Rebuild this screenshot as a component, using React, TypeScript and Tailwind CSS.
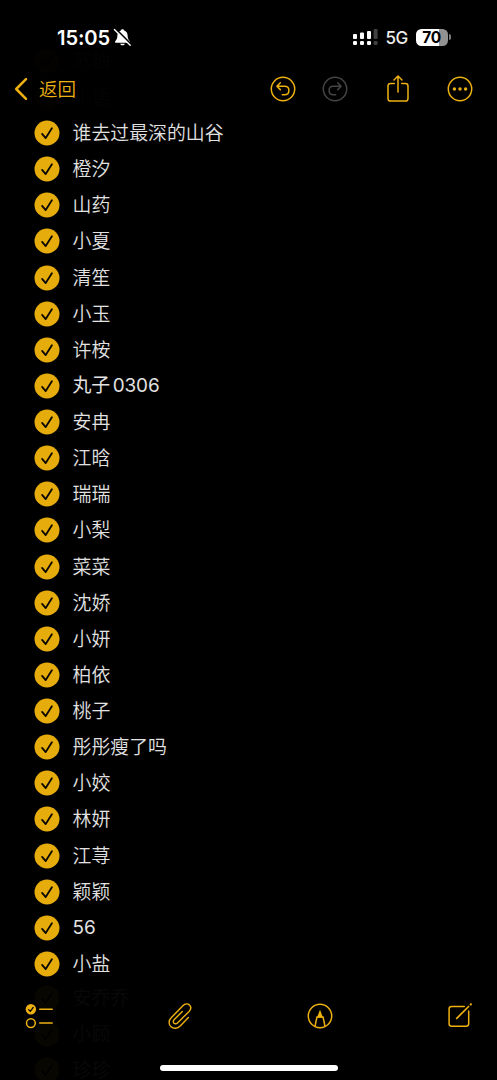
import type { ReactNode } from 'react';

const NAMES = [
  '谁去过最深的山谷', '橙汐', '山药', '小夏', '清笙', '小玉', '许桉', '丸子 0306',
  '安冉', '江晗', '瑞瑞', '小梨', '菜菜', '沈娇', '小妍', '柏依',
  '桃子', '彤彤瘦了吗', '小姣', '林妍', '江荨', '颖颖', '56', '小盐',
];
// rows scrolled under the translucent bars
const ABOVE = ['苏柚', '小语'];
const BELOW = ['安乔乔', '小顾', '珍珍'];

function CheckCircle() {
  return (
    <svg className="h-[26px] w-[26px] shrink-0" viewBox="0 0 26 26" fill="none">
      <circle cx="13" cy="13" r="12.5" fill="#e6ac0c" />
      <path d="M8.1 13.9l3.6 4.2 6.2-9.9" stroke="#0a0800" strokeWidth="1.8" strokeLinecap="round" strokeLinejoin="round" />
    </svg>
  );
}

function Row({ name }: { name: string }) {
  const latin = /\d/.test(name);
  return (
    <li className="flex h-[36.13px] items-center gap-[13px] pl-[33.5px]">
      <CheckCircle />
      <span className={`whitespace-pre text-[18.9px] leading-none text-[#e2e2e2] [word-spacing:-2.6px] ${latin ? 'pt-[2px] font-normal tracking-[-0.1px]' : 'pt-[3px] font-[350]'}`}>{name}</span>
    </li>
  );
}

function IconButton({ label, children }: { label: string; children: ReactNode }) {
  return <button aria-label={label} className="flex shrink-0 items-center justify-center">{children}</button>;
}

function StatusBar() {
  return (
    <div className="relative flex h-[66px] items-start justify-between pr-[46px] pl-[57px] pt-[26px]">
      <div className="flex h-[22px] items-center gap-[3px]">
        <span className="pt-[2px] text-[20.2px] font-semibold leading-none tracking-[-0.1px] text-white">15:05</span>
        <svg className="h-[19px] w-[19px]" viewBox="0 0 19 19" fill="none">
          <path d="M9.5 1.3c-.9 0-1.4.5-1.6 1.2-2.2.7-3.4 2.4-3.5 4.8-.1 3.6-.9 4.5-2.2 6-.5.6-.2 1.4.6 1.4h13.4c.8 0 1.1-.8.6-1.4-1.3-1.5-2.1-2.4-2.2-6-.1-2.4-1.3-4.1-3.5-4.8-.2-.7-.7-1.2-1.6-1.2z" fill="#fff" />
          <path d="M7.2 15.7h4.6c-.3 1-1.2 1.6-2.3 1.6s-2-.6-2.3-1.6z" fill="#fff" />
          <path d="M2.7.8l15.5 15.5" stroke="#000" strokeWidth="1.7" />
          <path d="M1.4 1.5l15.8 15.8" stroke="#fff" strokeWidth="1.4" strokeLinecap="round" />
        </svg>
      </div>
      <div className="flex h-[22px] items-center">
        <svg className="h-[18px] w-[26px]" viewBox="0 0 26 18">
          <g fill="#fff">
            <rect x="1" y="6" width="4" height="5" rx="1" />
            <rect x="8" y="4.5" width="4" height="6.5" rx="1" />
            <rect x="15" y="3" width="4" height="8" rx="1" />
            <rect x="1" y="13" width="4" height="4" rx="1.2" />
            <rect x="8" y="13" width="4" height="4" rx="1.2" />
            <rect x="15" y="13" width="4" height="4" rx="1.2" />
          </g>
          <g fill="#404040">
            <rect x="21.6" y="1" width="4" height="10" rx="1" />
            <rect x="21.6" y="13" width="4" height="4" rx="1.2" />
          </g>
        </svg>
        <span className="ml-[8px] w-[30.5px] pt-[2px] text-[17px] font-medium leading-none tracking-[-0.6px] text-[#eee]">5G</span>
        <div className="flex h-[17px] w-[32px] items-center justify-center rounded-[5.5px] bg-[linear-gradient(90deg,#fff_71%,#929292_71%)]">
          <span className="pr-[1px] pt-[1px] text-[15.5px] font-bold leading-none tracking-[-0.3px] text-black">70</span>
        </div>
        <span className="ml-[1px] h-[6px] w-[2px] rounded-r-full bg-[#808080]" />
      </div>
    </div>
  );
}

function NavBar() {
  return (
    <div className="relative flex h-[46px] items-center justify-between pr-[24px] pl-[14px] text-[#edb111]">
      <button className="flex items-center gap-[11px]">
        <svg className="h-[24px] w-[14px]" viewBox="0 0 14 24" fill="none" stroke="currentColor" strokeWidth="2.5" strokeLinecap="round" strokeLinejoin="round">
          <path d="M12 2.2L2.2 12 12 21.8" />
        </svg>
        <span className="text-[18.5px] font-[350] leading-none">返回</span>
      </button>
      <div className="flex items-center">
        <IconButton label="撤销">
          <svg className="h-[26px] w-[26px]" viewBox="0 0 26 26" fill="none" stroke="currentColor" strokeWidth="1.5" strokeLinecap="round" strokeLinejoin="round">
            <circle cx="13" cy="13" r="11.7" />
            <path d="M10.3 6.8L6.9 10.2l3.4 3.4M7.3 10.2h7.3c2.6 0 4.3 1.8 4.3 4.2s-1.7 4.3-4.3 4.3h-2.3" />
          </svg>
        </IconButton>
        <div className="ml-[26px] flex text-[#454545]">
          <IconButton label="重做">
            <svg className="h-[26px] w-[26px]" viewBox="0 0 26 26" fill="none" stroke="currentColor" strokeWidth="1.5" strokeLinecap="round" strokeLinejoin="round">
              <circle cx="13" cy="13" r="11.7" />
              <path d="M15.7 6.8l3.4 3.4-3.4 3.4M18.7 10.2h-7.3c-2.6 0-4.3 1.8-4.3 4.2s1.7 4.3 4.3 4.3h2.3" />
            </svg>
          </IconButton>
        </div>
        <div className="ml-[37.5px] mr-[.5px] flex">
          <IconButton label="共享">
            <svg className="h-[28px] w-[24px]" viewBox="0 0 24 28" fill="none" stroke="currentColor" strokeWidth="1.5" strokeLinecap="round" strokeLinejoin="round">
              <path d="M8.3 8.4H4.6C2.9 8.4 2 9.3 2 11v12.5c0 1.7.9 2.6 2.6 2.6h14.8c1.7 0 2.6-.9 2.6-2.6V11c0-1.7-.9-2.6-2.6-2.6h-3.7" />
              <path d="M12 17V1.2M8 5l4-4 4 4" />
            </svg>
          </IconButton>
        </div>
        <div className="ml-[37px] flex">
          <IconButton label="更多">
            <svg className="h-[26px] w-[26px]" viewBox="0 0 26 26" fill="none">
              <circle cx="13" cy="13" r="11.7" stroke="currentColor" strokeWidth="1.5" />
              <circle cx="7.4" cy="13" r="1.7" fill="currentColor" />
              <circle cx="13" cy="13" r="1.7" fill="currentColor" />
              <circle cx="18.6" cy="13" r="1.7" fill="currentColor" />
            </svg>
          </IconButton>
        </div>
      </div>
    </div>
  );
}

function Toolbar() {
  return (
    <div className="relative flex h-[68px] items-center justify-between pr-[24px] pl-[25px] text-[#edb111]">
      <IconButton label="核对清单">
        <svg className="h-[28px] w-[29px]" viewBox="0 0 29 28" fill="none" stroke="currentColor" strokeWidth="1.5" strokeLinecap="round" strokeLinejoin="round">
          <circle cx="5.9" cy="7.2" r="5.2" fill="currentColor" stroke="none" />
          <path d="M3.6 7.7l1.7 1.7 2.9-4.1" stroke="#000" strokeWidth="1.2" />
          <circle cx="5.9" cy="21.1" r="4.4" />
          <path d="M14.7 7.2h12.5M14.7 21.1h12.5" />
        </svg>
      </IconButton>
      <div className="-ml-[2px] mr-[2px] flex">
        <IconButton label="附件">
          <svg className="h-[28px] w-[26px]" viewBox="0 0 26 28" fill="none" stroke="currentColor" strokeWidth="1.4" strokeLinecap="round" strokeLinejoin="round">
            <path d="M22.4 15.6l-8.2 8.3c-2.7 2.8-6.6 3.2-9.2.9-2.6-2.4-2.5-6.3.2-9L17.1 3.5c1.9-1.9 4.7-2.1 6.4-.5 1.7 1.7 1.5 4.4-.4 6.4L11.5 20.9c-1.1 1.1-2.6 1.2-3.5.3-.9-1-.8-2.5.3-3.6l8-8.1" />
          </svg>
        </IconButton>
      </div>
      <IconButton label="标记">
        <svg className="h-[26px] w-[26px]" viewBox="0 0 26 26" fill="none" stroke="currentColor" strokeWidth="1.5" strokeLinejoin="round">
          <circle cx="13" cy="13" r="11.7" />
          <path d="M8 23.3l1.9-9.2h6.2l1.9 9.2" />
          <path d="M13 6.8l3.1 8H9.9z" fill="currentColor" stroke="none" />
        </svg>
      </IconButton>
      <IconButton label="新建备忘录">
        <svg className="h-[26px] w-[26px]" viewBox="0 0 26 26" fill="none" stroke="currentColor" strokeWidth="1.5" strokeLinecap="round" strokeLinejoin="round">
          <path d="M17.3 3.5H4.5c-1.5 0-2.4.9-2.4 2.4v14.9c0 1.5.9 2.4 2.4 2.4h14.8c1.5 0 2.4-.9 2.4-2.4V8" />
          <path d="M9.7 15.4L21.6 3.5" strokeWidth="1.7" />
          <path d="M23.7 1.5l.2-.2" strokeWidth="2.1" />
        </svg>
      </IconButton>
    </div>
  );
}

export default function App() {
  return (
    <div className="flex h-[1080px] w-full flex-col overflow-hidden bg-black font-['Inter','Noto_Sans_CJK_SC',sans-serif]">
      <header className="relative h-[115px] shrink-0">
        <ul aria-hidden className="absolute inset-x-0 bottom-0 opacity-[0.012]">
          {ABOVE.map(n => <Row key={n} name={n} />)}
        </ul>
        <StatusBar />
        <NavBar />
      </header>
      <ul className="shrink-0">
        {NAMES.map(n => <Row key={n} name={n} />)}
      </ul>
      <footer className="relative flex-1">
        <ul aria-hidden className="absolute inset-x-0 -top-[2px] opacity-[0.035]">
          {BELOW.map(n => <Row key={n} name={n} />)}
        </ul>
        <Toolbar />
        <div className="relative mx-auto mt-[15px] h-[6px] w-[178px] rounded-full bg-white" />
      </footer>
    </div>
  );
}
